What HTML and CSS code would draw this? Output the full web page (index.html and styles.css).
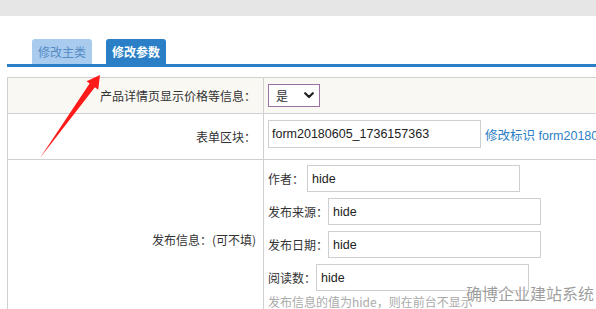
FILE: index.html
```html
<!DOCTYPE html>
<html lang="zh-CN">
<head>
<meta charset="utf-8">
<title>修改参数</title>
<link rel="stylesheet" href="styles.css">
</head>
<body>
<div class="topbar"></div>
<div class="page">
  <div class="tabs">
    <span class="tab tab-light">修改主类</span>
    <span class="tab tab-active">修改参数</span>
  </div>
  <table class="form-table">
    <tr class="row-price">
      <td class="label">产品详情页显示价格等信息：</td>
      <td class="value">
        <span class="select-wrap">
          <select class="select"><option>是</option><option>否</option></select>
          <svg class="chevron" width="10" height="7" viewBox="0 0 10 7"><path d="M1.2 1.2 L5 5 L8.8 1.2" fill="none" stroke="#222" stroke-width="2.2" stroke-linecap="round" stroke-linejoin="round"/></svg>
        </span>
      </td>
    </tr>
    <tr class="row-form">
      <td class="label">表单区块：</td>
      <td class="value">
        <span class="inline"><input class="input input-form" type="text" value="form20180605_1736157363"><a class="link" href="#">修改标识 form20180605_1736157363</a></span>
      </td>
    </tr>
    <tr class="row-publish">
      <td class="label">发布信息：(可不填)</td>
      <td class="value">
        <div class="field"><span class="field-label field-label-sp">作者：</span><input class="input" type="text" value="hide"></div>
        <div class="field"><span class="field-label">发布来源：</span><input class="input" type="text" value="hide"></div>
        <div class="field"><span class="field-label">发布日期：</span><input class="input" type="text" value="hide"></div>
        <div class="field"><span class="field-label">阅读数：</span><input class="input" type="text" value="hide"></div>
        <div class="hint">发布信息的值为hide，则在前台不显示</div>
      </td>
    </tr>
  </table>
</div>
<svg class="arrow" width="596" height="309" viewBox="0 0 596 309">
  <polygon points="40,158 89.6,83.5 86.6,81.3 100,75 98.2,89.7 94.9,87.3" fill="#ff1a1a"/>
</svg>
<div class="watermark">确博企业建站系统</div>
</body>
</html>
```
FILE: styles.css
```css
html, body {
  margin: 0;
  padding: 0;
  overflow: hidden;
}
body {
  width: 596px;
  height: 309px;
  position: relative;
  background: #fff;
  font-family: "Liberation Sans", "Noto Sans CJK SC", sans-serif;
  font-size: 12px;
  color: #333;
}
.topbar {
  height: 16px;
  background: #e6e6e6;
}
.page {
  padding-left: 7px;
  width: 760px;
}
.tabs {
  display: flex;
  gap: 14px;
  margin-top: 23px;
  padding-left: 25px;
  border-bottom: 3px solid #2a7fc6;
}
.tab {
  display: block;
  height: 25px;
  line-height: 25px;
  padding: 0 6px;
  border-radius: 3px 3px 0 0;
  font-family: "Noto Sans CJK SC", sans-serif;
  font-size: 12px;
}
.tab-light {
  background: #a9cbee;
  color: #558bc6;
}
.tab-active {
  background: #2a7fc6;
  color: #fff;
  font-weight: bold;
}
.form-table {
  margin-top: 10px;
  border-collapse: collapse;
  width: 740px;
}
.form-table td {
  border: 1px solid #d0d0d0;
  padding: 0;
}
.label {
  width: 248px;
  text-align: right;
  vertical-align: middle;
  padding-right: 7px !important;
  font-family: "Noto Sans CJK SC", sans-serif;
  line-height: 16px;
  white-space: nowrap;
}
.value {
  vertical-align: top;
  padding: 6px 4px 0 4px !important;
  white-space: nowrap;
}
.row-price td {
  background: #f9f8f3;
  height: 29px;
}
.row-form td {
  height: 39px;
}
.row-publish .value {
  padding-top: 5px !important;
}
.select-wrap {
  position: relative;
  display: inline-block;
  vertical-align: top;
}
.select {
  appearance: none;
  -webkit-appearance: none;
  display: block;
  width: 52px;
  height: 23px;
  margin: 0;
  padding: 0 0 0 7px;
  border: 1px solid #9b70a2;
  border-radius: 0;
  background: #fff;
  color: #333;
  font-family: "Noto Sans CJK SC", sans-serif;
  font-size: 12px;
  box-sizing: border-box;
  outline: none;
}
.chevron {
  position: absolute;
  left: 36px;
  top: 8px;
}
.inline {
  display: flex;
  align-items: center;
}
.input {
  width: 213px;
  height: 27px;
  margin: 0;
  padding: 0 4px;
  border: 1px solid #cfcfcf;
  border-radius: 0;
  box-sizing: border-box;
  font-family: "Liberation Sans", sans-serif;
  font-size: 12.5px;
  color: #222;
  background: #fff;
  outline: none;
}
.input-form {
  height: 28px;
  padding-left: 3px;
}
.link {
  margin-left: 4px;
  color: #2e7fc4;
  text-decoration: none;
  font-family: "Liberation Sans", "Noto Sans CJK SC", sans-serif;
  font-size: 12.5px;
}
.field {
  display: flex;
  align-items: center;
  height: 27px;
  margin-bottom: 6px;
}
.field:nth-last-of-type(2) {
  margin-bottom: 0;
}
.field-label {
  font-family: "Noto Sans CJK SC", sans-serif;
  font-size: 12px;
  color: #333;
}
.field-label-sp {
  margin-right: 3px;
}
.hint {
  margin-top: 2px;
  line-height: 18px;
  color: #aaa;
  font-family: "Noto Sans CJK SC", sans-serif;
  font-size: 12px;
  padding-bottom: 8px;
}
.arrow {
  position: absolute;
  left: 0;
  top: 0;
  pointer-events: none;
}
.watermark {
  position: absolute;
  right: 2px;
  top: 282px;
  font-family: "Noto Sans CJK SC", sans-serif;
  font-size: 16px;
  line-height: 22px;
  color: rgba(120, 120, 120, 0.72);
  text-shadow: 0 0 2px #fff, 0 0 1px #fff;
  pointer-events: none;
}
```
